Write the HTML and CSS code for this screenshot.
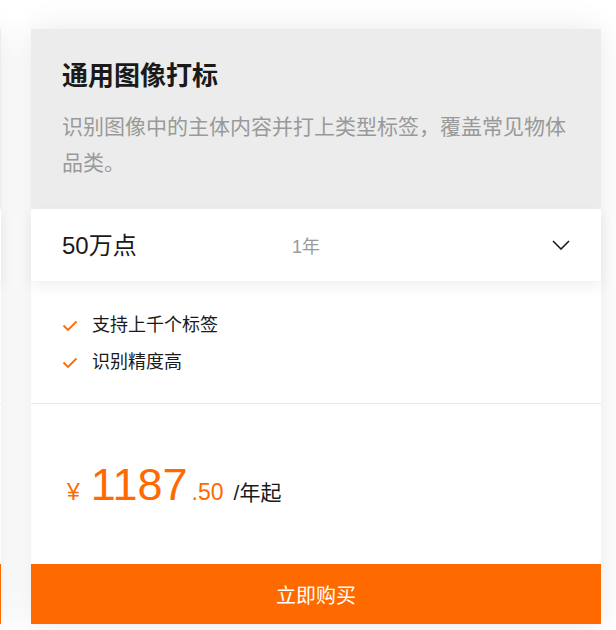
FILE: index.html
```html
<!DOCTYPE html>
<html lang="zh">
<head>
<meta charset="utf-8">
<link rel="stylesheet" href="styles.css">
</head>
<body>
<div class="row">
  <div class="card card-prev">
    <div class="head"></div>
    <div class="select"></div>
    <div class="features"></div>
    <div class="price-area"></div>
    <div class="buy"></div>
  </div>
  <div class="card">
    <div class="head">
      <h2 class="title">通用图像打标</h2>
      <p class="desc">识别图像中的主体内容并打上类型标签，覆盖常见物体品类。</p>
    </div>
    <div class="select">
      <span class="amount">50万点</span>
      <span class="period">1年</span>
      <svg class="chev" width="18" height="10" viewBox="0 0 18 10"><path d="M1 1 L9 9 L17 1" fill="none" stroke="#1a1a1a" stroke-width="1.6"/></svg>
    </div>
    <ul class="features">
      <li><svg class="check" width="16" height="12" viewBox="0 0 16 12"><path d="M1.5 5.5 L6 10 L14.5 1.5" fill="none" stroke="#ff6a00" stroke-width="1.8"/></svg>支持上千个标签</li>
      <li><svg class="check" width="16" height="12" viewBox="0 0 16 12"><path d="M1.5 5.5 L6 10 L14.5 1.5" fill="none" stroke="#ff6a00" stroke-width="1.8"/></svg>识别精度高</li>
    </ul>
    <div class="price-area">
      <span class="yen">¥</span><span class="int">1187</span><span class="dec">.50</span><span class="unit">/年起</span>
    </div>
    <div class="buy">立即购买</div>
  </div>
</div>
</body>
</html>
```
FILE: styles.css
```css
html, body {
  margin: 0;
  padding: 0;
  background: #ffffff;
  overflow: hidden;
  height: 630px;
}
body {
  font-family: "Liberation Sans", "Noto Sans CJK SC", sans-serif;
  color: #1a1a1a;
}
.row {
  display: flex;
  gap: 30px;
  padding-top: 29px;
  margin-left: -569px;
}
.card {
  flex: 0 0 570px;
  width: 570px;
  display: flex;
  flex-direction: column;
  background: #fff;
  box-shadow: 0 0 30px rgba(0, 0, 0, 0.09);
}
.head {
  background: #ececec;
  height: 180px;
  box-sizing: border-box;
  padding: 29px 31px 0 31px;
}
.title {
  margin: 0;
  font-size: 26px;
  font-weight: bold;
  line-height: 36px;
  color: #1a1a1a;
}
.desc {
  margin: 15px 0 0 0;
  font-size: 21px;
  line-height: 36px;
  color: #999;
}
.select {
  height: 72px;
  background: #fff;
  display: flex;
  align-items: center;
  padding: 0 31px;
  box-shadow: 0 6px 14px rgba(0, 0, 0, 0.06);
  position: relative;
  z-index: 1;
}
.amount {
  font-size: 24px;
  width: 230px;
  margin-top: -3px;
}
.period {
  font-size: 18px;
  color: #999;
  flex: 1;
}
.features {
  list-style: none;
  margin: 0;
  padding: 26px 31px 31px 31px;
  height: 123px;
  box-sizing: border-box;
  border-bottom: 1px solid #e8e8e8;
}
.features li {
  display: flex;
  align-items: center;
  font-size: 18px;
  line-height: 37px;
  color: #1a1a1a;
}
.check {
  margin-right: 14px;
}
.price-area {
  height: 160px;
  display: flex;
  align-items: baseline;
  padding: 0 31px;
  box-sizing: border-box;
  padding-top: 55px;
}
.yen {
  color: #ff6a00;
  font-size: 23px;
  margin-right: 11px;
  margin-left: 5px;
}
.int {
  color: #ff6a00;
  font-size: 45px;
}
.dec {
  color: #ff6a00;
  font-size: 23px;
  margin-left: 4px;
  margin-right: 10px;
}
.unit {
  font-size: 21px;
  color: #1a1a1a;
}
.buy {
  height: 60px;
  background: #ff6a00;
  color: #fff;
  font-size: 20px;
  display: flex;
  align-items: center;
  justify-content: center;
}
```
